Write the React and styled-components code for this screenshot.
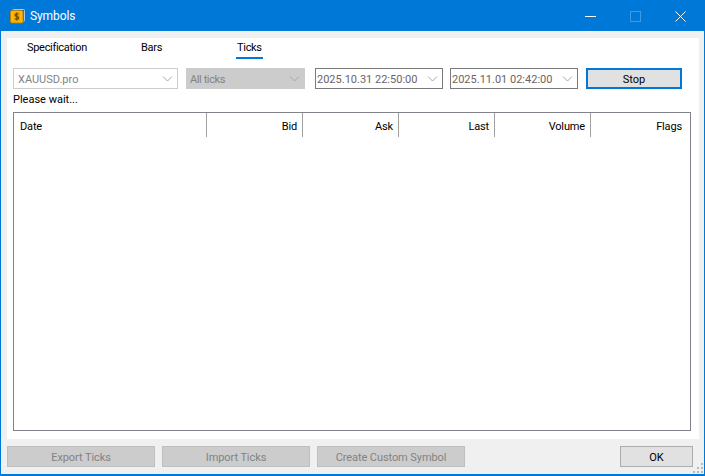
import React from "react";
import styled, { createGlobalStyle } from "styled-components";

const GlobalStyle = createGlobalStyle`
  html, body {
    margin: 0;
    padding: 0;
    background: #f0f0f0;
  }
  * {
    box-sizing: border-box;
  }
`;

const columns = [
  { name: "Date", width: 193, left: true },
  { name: "Bid", width: 96 },
  { name: "Ask", width: 96 },
  { name: "Last", width: 96 },
  { name: "Volume", width: 96 },
  { name: "Flags", width: 98, last: true },
];

function Chevron() {
  return (
    <svg width="11" height="6" viewBox="0 0 11 6">
      <path d="M1 0.5 L5.5 5 L10 0.5" fill="none" stroke="#a6a6a6" strokeWidth="1" />
    </svg>
  );
}

function Combo({ width, kind, children }) {
  return (
    <ComboBox $width={width} $kind={kind}>
      <ComboText $kind={kind}>{children}</ComboText>
      <Chevron />
    </ComboBox>
  );
}

export default function App() {
  return (
    <>
      <GlobalStyle />
      <Window>
        <TitleBar>
          <AppIcon width="15" height="15" viewBox="0 0 15 15">
            <rect x="2.5" y="0.5" width="12" height="12" rx="1" fill="none" stroke="#a9c9e6" strokeWidth="1" />
            <rect x="0.5" y="1.5" width="12.5" height="12.5" rx="1.5" fill="#fdb913" stroke="#b77f00" strokeWidth="1" />
            <rect x="3.5" y="3" width="6.5" height="9.5" fill="#f2a900" />
            <path
              d="M8.6 5.2 C8.2 4.6 5 4.4 5 6 C5 7.9 8.7 7 8.7 9 C8.7 10.5 5.5 10.4 4.9 9.6 M6.8 3.6 V11.4"
              fill="none"
              stroke="#6b4300"
              strokeWidth="1.1"
            />
          </AppIcon>
          <Title>Symbols</Title>
          <WindowControls>
            <ControlBtn>
              <svg width="11" height="11" viewBox="0 0 11 11">
                <path d="M0 5.5 H11" stroke="#fff" strokeWidth="1" />
              </svg>
            </ControlBtn>
            <ControlBtn>
              <svg width="11" height="11" viewBox="0 0 11 11">
                <rect x="0.5" y="0.5" width="10" height="10" fill="none" stroke="#3f9ae4" strokeWidth="1" />
              </svg>
            </ControlBtn>
            <ControlBtn>
              <svg width="11" height="11" viewBox="0 0 11 11">
                <path d="M0.5 0.5 L10.5 10.5 M10.5 0.5 L0.5 10.5" stroke="#fff" strokeWidth="1" />
              </svg>
            </ControlBtn>
          </WindowControls>
        </TitleBar>
        <Body>
          <Panel>
            <Tabs>
              <Tab $width={114}>Specification</Tab>
              <Tab $width={95}>Bars</Tab>
              <Tab $active>Ticks</Tab>
            </Tabs>
            <Filters>
              <Combo width={165} kind="symbol">XAUUSD.pro</Combo>
              <Combo width={119} kind="disabled">All ticks</Combo>
              <Combo width={128} kind="date">2025.10.31 22:50:00</Combo>
              <Combo width={128} kind="date">2025.11.01 02:42:00</Combo>
              <StopButton>Stop</StopButton>
            </Filters>
            <Status>Please wait...</Status>
            <Table>
              <TableHeader>
                {columns.map((col) => (
                  <HeaderCell key={col.name} $width={col.width} $left={col.left} $last={col.last}>
                    {col.name}
                  </HeaderCell>
                ))}
              </TableHeader>
            </Table>
          </Panel>
          <Footer>
            <FooterButton>Export Ticks</FooterButton>
            <FooterButton>Import Ticks</FooterButton>
            <FooterButton>Create Custom Symbol</FooterButton>
            <OkButton>OK</OkButton>
          </Footer>
          <Grip width="11" height="11" viewBox="0 0 11 11">
            <g fill="#b8b8b8">
              <rect x="8" y="0" width="2" height="2" />
              <rect x="4" y="4" width="2" height="2" />
              <rect x="8" y="4" width="2" height="2" />
              <rect x="0" y="8" width="2" height="2" />
              <rect x="4" y="8" width="2" height="2" />
              <rect x="8" y="8" width="2" height="2" />
            </g>
          </Grip>
        </Body>
      </Window>
    </>
  );
}

const Window = styled.div`
  position: relative;
  width: 705px;
  height: 476px;
  display: flex;
  flex-direction: column;
  border: 1px solid #0078d7;
  border-bottom-width: 2px;
  font-family: Roboto, "Noto Sans", sans-serif;
  font-size: 11px;
  color: #000;
  overflow: hidden;
`;

const TitleBar = styled.div`
  height: 30px;
  flex: none;
  display: flex;
  align-items: center;
  background: #0078d7;
  padding: 0 1px 0 9px;
`;

const AppIcon = styled.svg`
  flex: none;
  display: block;
`;

const Title = styled.div`
  margin-left: 5px;
  color: #fff;
  font-size: 12px;
  letter-spacing: -0.1px;
`;

const WindowControls = styled.div`
  margin-left: auto;
  display: flex;
`;

const ControlBtn = styled.div`
  width: 45px;
  height: 30px;
  display: flex;
  align-items: center;
  justify-content: center;
`;

const Body = styled.div`
  position: relative;
  flex: 1;
  display: flex;
  flex-direction: column;
  background: #f0f0f0;
  padding: 7px 5px 0 6px;
`;

const Panel = styled.div`
  height: 401px;
  flex: none;
  display: flex;
  flex-direction: column;
  background: #fff;
  padding: 0 8px 8px 6px;
`;

const Tabs = styled.div`
  height: 30px;
  flex: none;
  display: flex;
  padding-left: 14px;
  padding-top: 2px;
  letter-spacing: -0.3px;
`;

const Tab = styled.div`
  width: ${({ $width }) => ($width ? `${$width}px` : "auto")};
  height: 19px;
  line-height: 16px;
  white-space: nowrap;
  ${({ $active }) => $active && "border-bottom: 2px solid #0078d7; padding: 0 1px; align-self: flex-start;"}
`;

const Filters = styled.div`
  height: 21px;
  flex: none;
  display: flex;
  gap: 7px;
`;

const ComboBox = styled.div`
  width: ${({ $width }) => $width}px;
  height: 21px;
  flex: none;
  display: flex;
  align-items: center;
  justify-content: space-between;
  padding: 1px 4px 0 ${({ $kind }) => ($kind === "symbol" ? 4 : $kind === "date" ? 1 : 3)}px;
  margin-right: ${({ $kind }) => ($kind === "disabled" ? 3 : 0)}px;
  margin-left: ${({ $kind }) => ($kind === "disabled" ? 1 : 0)}px;
  background: ${({ $kind }) => ($kind === "disabled" ? "#cccccc" : "#fff")};
  border: 1px solid ${({ $kind }) => ($kind === "date" ? "#7a7a7a" : "#cccccc")};
`;

const ComboText = styled.span`
  white-space: nowrap;
  color: ${({ $kind }) => ($kind === "date" ? "#6d6363" : "#838383")};
  letter-spacing: ${({ $kind }) => ($kind === "disabled" ? "-0.4px" : "0")};
`;

const StopButton = styled.div`
  width: 96px;
  height: 21px;
  margin-left: 1px;
  padding: 1px 0 0;
  display: flex;
  align-items: center;
  justify-content: center;
  background: #e1e1e1;
  border: 2px solid #0078d7;
`;

const Status = styled.div`
  height: 23px;
  flex: none;
  padding-top: 3px;
  line-height: 16px;
`;

const Table = styled.div`
  flex: 1;
  border: 1px solid #82828c;
  background: #fff;
`;

const TableHeader = styled.div`
  height: 25px;
  display: flex;
`;

const HeaderCell = styled.div`
  width: ${({ $width }) => $width}px;
  height: 24px;
  display: flex;
  align-items: center;
  justify-content: ${({ $left }) => ($left ? "flex-start" : "flex-end")};
  padding: 3px ${({ $last }) => ($last ? 7 : 5)}px 0 6px;
  letter-spacing: -0.15px;
  border-right: ${({ $last }) => ($last ? "none" : "1px solid #a0a0a0")};
`;

const Footer = styled.div`
  flex: 1;
  display: flex;
  gap: 7px;
  padding-top: 7px;
  align-items: flex-start;
`;

const FooterButton = styled.div`
  width: 148px;
  height: 21px;
  padding-top: 1px;
  display: flex;
  align-items: center;
  justify-content: center;
  background: #cccccc;
  border: 1px solid #bfbfbf;
  color: #838383;
  letter-spacing: -0.08px;
`;

const OkButton = styled.div`
  width: 73px;
  height: 21px;
  padding-top: 1px;
  margin-left: auto;
  margin-right: 6px;
  display: flex;
  align-items: center;
  justify-content: center;
  background: #e1e1e1;
  border: 1px solid #adadad;
`;

const Grip = styled.svg`
  position: absolute;
  right: 0;
  bottom: 0;
`;
